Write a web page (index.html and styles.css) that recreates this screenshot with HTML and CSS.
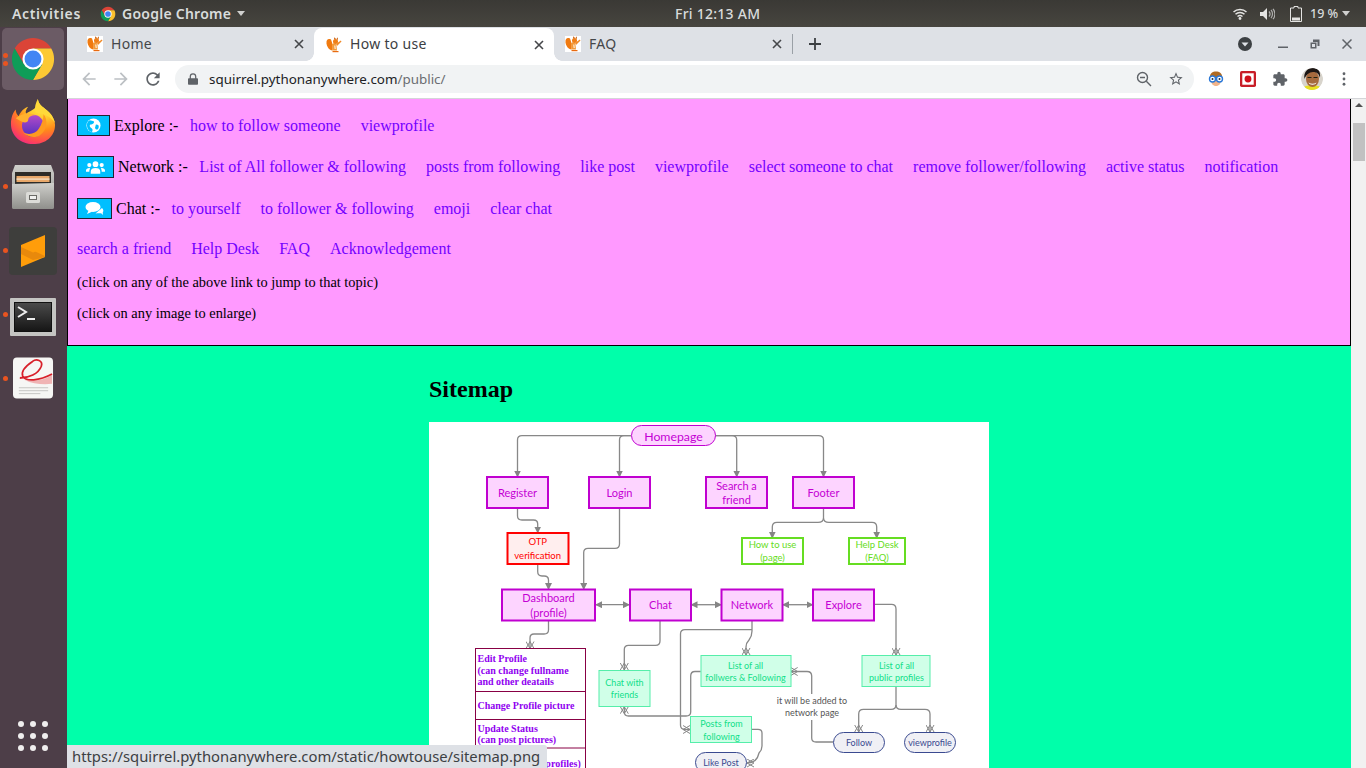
FILE: index.html
```html
<!DOCTYPE html>
<html lang="en">
<head>
<meta charset="utf-8">
<title>How to use</title>
<link rel="stylesheet" href="styles.css">
</head>
<body>
<svg class="defs" width="0" height="0" aria-hidden="true">
  <defs>
    <symbol id="squirrel" viewBox="0 0 16 16">
      <rect width="16" height="16" fill="#fff"/>
      <path d="M5 2.500C2 1 0 3 0.500 6.500S3 13 6.500 13.500C7 10 6.500 6 5 2.500z" fill="#f07a10"/>
      <path d="M6 7c2-1.500 4-1 4.500 2l.5 4.500H6.500z" fill="#f29a3a"/>
      <circle cx="9.500" cy="4.500" r="2.500" fill="#ef7f18"/>
      <path d="M8 2.500l.3-2.200L10 2zM10.500 2l1.200-1.700.3 2.700z" fill="#c85a08"/>
      <path d="M10 7l4.800-3.500.7 1-4.500 4.500z" fill="#f08a28"/>
      <path d="M6.500 14h6v1.200h-6z" fill="#e86a10"/>
      <path d="M8 8.500h1.500l.5 3.500H8.500z" fill="#fcdcb8"/>
    </symbol>
    <symbol id="close-x" viewBox="0 0 10 10">
      <path d="M1 1l8 8M9 1l-8 8" fill="none" stroke="currentColor" stroke-width="1.600"/>
    </symbol>
    <symbol id="arrow-back" viewBox="0 0 24 24">
      <path d="M20 11H7.830l5.590-5.590L12 4l-8 8 8 8 1.410-1.410L7.830 13H20v-2z" fill="currentColor"/>
    </symbol>
    <marker id="tri" viewBox="0 0 7 7" refX="6" refY="3.500" markerWidth="7" markerHeight="7" markerUnits="userSpaceOnUse" orient="auto-start-reverse">
      <path d="M0 0L7 3.500L0 7z" fill="#858585"/>
    </marker>
    <marker id="open" viewBox="0 0 8 9" refX="7.500" refY="4.500" markerWidth="8" markerHeight="9" markerUnits="userSpaceOnUse" orient="auto">
      <path d="M0.500 0.500L7.500 4.500L0.500 8.500M7.500 0.500L0.500 4.500L7.500 8.500" fill="none" stroke="#888" stroke-width="1"/>
    </marker>
    <radialGradient id="ffGrad" cx="0.72" cy="0.08" r="1.050">
      <stop offset="0" stop-color="#fff44f"/>
      <stop offset="0.32" stop-color="#ffcb2e"/>
      <stop offset="0.58" stop-color="#ff8a1a"/>
      <stop offset="0.82" stop-color="#ff4a50"/>
      <stop offset="1" stop-color="#ee1f90"/>
    </radialGradient>
    <linearGradient id="ffPurple" x1="0" y1="0" x2="0" y2="1">
      <stop offset="0" stop-color="#b54bc8"/>
      <stop offset="1" stop-color="#4e30c0"/>
    </linearGradient>
    <linearGradient id="cabinet" x1="0" y1="0" x2="0" y2="1">
      <stop offset="0" stop-color="#cfcfcb"/>
      <stop offset="1" stop-color="#8f8f8b"/>
    </linearGradient>
    <linearGradient id="termGrad" x1="0" y1="0" x2="0" y2="1">
      <stop offset="0" stop-color="#4a4a4a"/>
      <stop offset="1" stop-color="#161616"/>
    </linearGradient>
  </defs>
</svg>

<div class="desktop">
  <header class="topbar">
    <div class="top-left">
      <span class="top-item activities">Activities</span>
      <span class="top-item app-name">
        <svg class="app-logo" viewBox="0 0 48 48">
          <path d="M4.950 13A22 22 0 0 1 43.050 13H24L14.500 29.500z" fill="#db4437"/>
          <path d="M43.050 13A22 22 0 0 1 24 46L33.500 29.500L24 13z" fill="#fbc02d"/>
          <path d="M24 46A22 22 0 0 1 4.950 13L14.500 29.500H33.500z" fill="#0f9d58"/>
          <circle cx="24" cy="24" r="11" fill="#fff"/><circle cx="24" cy="24" r="8.500" fill="#4285f4"/>
        </svg>
        Google Chrome
        <i class="caret"></i>
      </span>
    </div>
    <span class="top-item clock">Fri 12:13 AM</span>
    <div class="top-right">
      <svg class="tray wifi" viewBox="0 0 14 12"><path d="M0.500 4C4 0.500 10 0.500 13.500 4M2.500 6.300C5 4 9 4 11.500 6.300M4.500 8.500C6 7.300 8 7.300 9.500 8.500" fill="none" stroke="#e4e4e2" stroke-width="1.500"/><circle cx="7" cy="10.500" r="1.400" fill="#e4e4e2"/></svg>
      <svg class="tray volume" viewBox="0 0 15 12"><path d="M0 4h3l4-4v12L3 8H0z" fill="#e4e4e2"/><path d="M9 3.500c1.300 1.500 1.300 3.500 0 5M11 2c2 2 2 6 0 8M13 0.800c2.600 3 2.600 7.400 0 10.400" fill="none" stroke="#b0b0ae" stroke-width="1.200"/></svg>
      <svg class="tray battery" viewBox="0 0 12 16"><path d="M4 0.500h4v1.500h3.500v13.500h-11V2H4z" fill="none" stroke="#e4e4e2" stroke-width="1"/><rect x="2" y="11.500" width="8" height="3" fill="#e4e4e2"/></svg>
      <span class="top-item percent">19 %</span>
      <i class="caret"></i>
    </div>
  </header>

  <div class="workspace">
    <nav class="dock">
      <div class="dock-item active">
        <i class="run-dot upper"></i><i class="run-dot lower"></i>
        <svg class="dock-icon" viewBox="0 0 48 48">
          <path d="M4.950 13A22 22 0 0 1 43.050 13H24L14.500 29.500z" fill="#db4437"/>
          <path d="M43.050 13A22 22 0 0 1 24 46L33.500 29.500L24 13z" fill="#fcc934"/>
          <path d="M24 46A22 22 0 0 1 4.950 13L14.500 29.500H33.500z" fill="#0f9d58"/>
          <circle cx="24" cy="24" r="11" fill="#fff"/><circle cx="24" cy="24" r="8.800" fill="#4285f4"/>
        </svg>
      </div>
      <div class="dock-item">
        <svg class="dock-icon firefox" viewBox="0 0 48 48">
          <path d="M29 0C30 7 36 9 41 14C45 18 47 23 47 27C47 39 37 47 24 47C11 47 1 38 1 26C1 20 3 14 6 11C6 14 7 16 9 18C11 13 15 9 19 8C16 12 16 14 17 15C22 12 30 10 29 0Z" fill="url(#ffGrad)"/>
          <path d="M29 0C30 7 36 9 41 14C44 17 46 21 47 25C42 17 33 15 27 14C25 9 27 4 29 0Z" fill="#ffd93a"/>
          <circle cx="24" cy="28" r="11.500" fill="url(#ffPurple)"/>
          <path d="M6 20C12 15 20 14 27 17C22 17 19 19 19 22C19 25 14 25 11 23Z" fill="#ffb22e"/>
          <path d="M35 16C40 22 39 33 31 38C26 41 18 40 14 35C20 38 27 36 30 31C33 27 35 21 35 16Z" fill="#ff9a20"/>
        </svg>
      </div>
      <div class="dock-item">
        <i class="run-dot"></i>
        <svg class="dock-icon files" viewBox="0 0 42 44">
          <path d="M3 0h36l3 8v34a2 2 0 0 1-2 2H2a2 2 0 0 1-2-2V8z" fill="url(#cabinet)"/>
          <rect x="3" y="7" width="36" height="14" fill="#2e2c28"/>
          <rect x="4.500" y="11" width="33" height="6" fill="#e8a86a"/>
          <rect x="4.500" y="13.500" width="33" height="1.200" fill="#f5e5d0"/>
          <path d="M0 19l39-1 3 0v24a2 2 0 0 1-2 2H2a2 2 0 0 1-2-2z" fill="url(#cabinet)"/>
          <rect x="14" y="27" width="14" height="11" rx="1.500" fill="#dcdcd8"/>
          <rect x="17" y="30" width="8" height="5" fill="#6a6a66"/><rect x="18" y="31" width="6" height="3" fill="#f0f0ee"/>
        </svg>
      </div>
      <div class="dock-item">
        <i class="run-dot"></i>
        <svg class="dock-icon sublime" viewBox="0 0 48 48">
          <rect width="48" height="48" rx="4" fill="#3e3e3c"/>
          <path d="M12 27L36 18V30L12 40z" fill="#ff9d0a"/>
          <path d="M12 18L36 29V30L24 33L12 27z" fill="#e8890c"/>
          <path d="M12 18L36 8V21L24 25.500L12 20z" fill="#ff9d0a"/>
        </svg>
      </div>
      <div class="dock-item">
        <i class="run-dot"></i>
        <svg class="dock-icon terminal" viewBox="0 0 46 38">
          <rect width="46" height="38" rx="1" fill="#c4c4c2"/>
          <rect x="4" y="4" width="38" height="30" fill="#111"/>
          <rect x="5" y="5" width="36" height="28" fill="url(#termGrad)"/>
          <path d="M8 9l8 5-8 5" fill="none" stroke="#eee" stroke-width="2"/>
          <rect x="17" y="20" width="8" height="2" fill="#eee"/>
        </svg>
      </div>
      <div class="dock-item">
        <i class="run-dot"></i>
        <svg class="dock-icon evince" viewBox="0 0 42 42">
          <rect width="41" height="42" rx="4" fill="#f6f6f4"/>
          <path d="M12 23C22 25 32 23 40 18V27C30 28 20 27 12 23Z" fill="#f0b4b4"/>
          <path d="M7 21C16 21 26 17 29 9C31 3 24 1 20 4C14 8 8 14 10 19C13 25 27 24 40 17" fill="none" stroke="#d8202a" stroke-width="1.800"/>
          <path d="M6 31h30M6 34h30M6 37h22" stroke="#c4c4c2" stroke-width="1"/>
        </svg>
      </div>
      <div class="app-grid">
        <i></i><i></i><i></i><i></i><i></i><i></i><i></i><i></i><i></i>
      </div>
    </nav>

    <main class="browser">
      <div class="tabstrip">
        <div class="tab">
          <svg class="favicon"><use href="#squirrel"/></svg>
          <span class="tab-title">Home</span>
          <svg class="tab-close"><use href="#close-x"/></svg>
        </div>
        <div class="tab current">
          <svg class="favicon"><use href="#squirrel"/></svg>
          <span class="tab-title">How to use</span>
          <svg class="tab-close"><use href="#close-x"/></svg>
        </div>
        <div class="tab">
          <svg class="favicon"><use href="#squirrel"/></svg>
          <span class="tab-title">FAQ</span>
          <svg class="tab-close"><use href="#close-x"/></svg>
        </div>
        <i class="tab-divider"></i>
        <svg class="new-tab" viewBox="0 0 12 12"><path d="M6 0v12M0 6h12" stroke="#3c4043" stroke-width="1.800"/></svg>
        <div class="window-controls">
          <svg class="win-search" viewBox="0 0 14 14"><circle cx="7" cy="7" r="7" fill="#3c4043"/><path d="M3.500 5.500h7L7 9.500z" fill="#dee1e6"/></svg>
          <svg class="win-btn" viewBox="0 0 10 10"><rect x="0" y="7.500" width="10" height="1.500" fill="#5f6368"/></svg>
          <svg class="win-btn" viewBox="0 0 10 10"><path d="M3 0.500h6.500v6.500H7.500V3H3zM0.500 3.500h6v6h-6z" fill="#5f6368"/><rect x="2" y="5" width="3" height="3" fill="#dee1e6"/></svg>
          <svg class="win-btn" viewBox="0 0 10 10"><path d="M0.500 0.500l9 9M9.500 0.500l-9 9" stroke="#5f6368" stroke-width="1.500"/></svg>
        </div>
      </div>

      <div class="toolbar">
        <button class="tool-btn faded"><svg class="tool-icon"><use href="#arrow-back"/></svg></button>
        <button class="tool-btn faded"><svg class="tool-icon flip"><use href="#arrow-back"/></svg></button>
        <button class="tool-btn"><svg class="tool-icon" viewBox="0 0 24 24"><path d="M17.650 6.350C16.200 4.900 14.210 4 12 4c-4.420 0-7.990 3.580-7.990 8s3.570 8 7.990 8c3.730 0 6.840-2.550 7.730-6h-2.080c-.82 2.330-3.040 4-5.650 4-3.310 0-6-2.690-6-6s2.690-6 6-6c1.660 0 3.140.69 4.220 1.780L13 11h7V4l-2.350 2.350z" fill="currentColor"/></svg></button>
        <div class="omnibox">
          <svg class="lock" viewBox="0 0 12 14"><path d="M2 6V4a4 4 0 0 1 8 0v2h1a1 1 0 0 1 1 1v6a1 1 0 0 1-1 1H1a1 1 0 0 1-1-1V7a1 1 0 0 1 1-1zm1.500 0h5V4a2.500 2.500 0 0 0-5 0z" fill="#5f6368"/></svg>
          <span class="url"><span class="host">squirrel.pythonanywhere.com</span>/public/</span>
          <svg class="omni-icon" viewBox="0 0 16 16"><circle cx="6.500" cy="6.500" r="5" fill="none" stroke="#5f6368" stroke-width="1.400"/><path d="M4 6.500h5M10.300 10.300l4.700 4.700" stroke="#5f6368" stroke-width="1.400"/></svg>
          <svg class="omni-icon" viewBox="0 0 24 24"><path d="M22 9.240l-7.190-.62L12 2 9.190 8.630 2 9.240l5.460 4.730L5.820 21 12 17.270 18.180 21l-1.630-7.030L22 9.240zM12 15.400l-3.760 2.270 1-4.280-3.320-2.880 4.380-.38L12 6.100l1.710 4.040 4.380.38-3.320 2.880 1 4.280L12 15.400z" fill="#5f6368"/></svg>
        </div>
        <button class="tool-btn ext">
          <svg class="ext-icon" viewBox="0 0 16 16"><path d="M2 8C1 2 5 0.500 8 0.500S15 2 14 8z" fill="#b06a20"/><path d="M3 8c0 5 2 7 5 7s5-2 5-7z" fill="#f2b48a"/><circle cx="4.500" cy="8" r="3" fill="#fff" stroke="#2a78d8" stroke-width="1.400"/><circle cx="11.500" cy="8" r="3" fill="#fff" stroke="#2a78d8" stroke-width="1.400"/><circle cx="4.500" cy="8" r="1" fill="#234"/><circle cx="11.500" cy="8" r="1" fill="#234"/></svg>
        </button>
        <button class="tool-btn ext">
          <svg class="ext-icon" viewBox="0 0 14 14"><rect width="14" height="14" rx="1.500" fill="#c81e28"/><rect x="2" y="2" width="10" height="10" fill="#fff"/><circle cx="7" cy="7" r="3" fill="#d0101c"/></svg>
        </button>
        <button class="tool-btn ext">
          <svg class="ext-icon" viewBox="0 0 24 24"><path d="M20.500 11H19V7c0-1.100-.9-2-2-2h-4V3.500C13 2.120 11.880 1 10.500 1S8 2.120 8 3.500V5H4c-1.100 0-1.990.9-1.990 2v3.800H3.500c1.490 0 2.700 1.210 2.700 2.700s-1.210 2.700-2.700 2.700H2V20c0 1.100.9 2 2 2h3.800v-1.500c0-1.490 1.210-2.700 2.700-2.700 1.490 0 2.700 1.210 2.700 2.700V22H17c1.100 0 2-.9 2-2v-4h1.500c1.380 0 2.500-1.120 2.500-2.500S21.880 11 20.500 11z" fill="#5f6368"/></svg>
        </button>
        <button class="tool-btn ext">
          <svg class="avatar" viewBox="0 0 22 22"><circle cx="11" cy="11" r="11" fill="#d8d4cc"/><path d="M3 19c2-2.500 14-2.500 16 0a11 11 0 0 1-16 0z" fill="#e8e020"/><ellipse cx="11.500" cy="11" rx="6.500" ry="8" fill="#a56a3e"/><path d="M3.500 11C2 3 8 0 12 0s8 2 7 10c-1-4-3-6-7-6S5 7 3.500 11z" fill="#1c1614"/><path d="M7.500 14.500c2.500 1.800 5.500 1.800 8 0-1 3-7 3-8 0z" fill="#fff"/><path d="M6.500 9.500h4M12.500 9.500h4" stroke="#221" stroke-width="1"/></svg>
        </button>
        <button class="tool-btn ext">
          <svg class="menu-dots" viewBox="0 0 4 16"><circle cx="2" cy="2" r="1.600" fill="#5f6368"/><circle cx="2" cy="8" r="1.600" fill="#5f6368"/><circle cx="2" cy="14" r="1.600" fill="#5f6368"/></svg>
        </button>
      </div>

      <div class="viewport">
        <div class="page">
          <section class="topics">
            <p class="row">
              <span class="topic-btn explore">
                <svg class="btn-icon" viewBox="0 0 16 16"><circle cx="8" cy="8" r="7.500" fill="#fff"/><path d="M4 2.500c2 0 3 1 4 1s1 2-1 3-3 0-3 2 3 2 3 4-1 2.500-1.500 2.500C3 14 1 11 1 8s1-4.500 3-5.500zM11 7c2 0 3 1 2.500 3S11.500 13 10.500 12s-1-2-.5-3 0-2 1-2z" fill="#00bfff"/></svg>
              </span>
              <span class="label">Explore :-</span>
              <a href="#follow">how to follow someone</a>
              <a href="#viewprofile">viewprofile</a>
            </p>
            <p class="row">
              <span class="topic-btn network">
                <svg class="btn-icon wide" viewBox="0 0 20 14"><circle cx="10" cy="4" r="3" fill="#fff"/><path d="M5 14v-2c0-3 2-4 5-4s5 1 5 4v2z" fill="#fff"/><circle cx="3.500" cy="5" r="2.200" fill="#fff"/><circle cx="16.500" cy="5" r="2.200" fill="#fff"/><path d="M0 12v-1.500C0 9 1.500 8 3.500 8c.8 0 .8.500.5 1-.5 1-.5 2-.5 3zM20 12v-1.500C20 9 18.500 8 16.500 8c-.8 0-.8.500-.5 1 .5 1 .5 2 .5 3z" fill="#fff"/></svg>
              </span>
              <span class="label">Network :-</span>
              <a href="#list">List of All follower &amp; following</a>
              <a href="#posts">posts from following</a>
              <a href="#like">like post</a>
              <a href="#viewprofile2">viewprofile</a>
              <a href="#select">select someone to chat</a>
              <a href="#remove">remove follower/following</a>
              <a href="#active">active status</a>
              <a href="#notification">notification</a>
            </p>
            <p class="row chat-row">
              <span class="topic-btn chat">
                <svg class="btn-icon wide" viewBox="0 0 18 14"><path d="M10 11.500c2-.3 4.500-.5 6 0l1.500 1.500-.3-2.500c1-1 1-3-.7-4.500z" fill="#fff"/><ellipse cx="7.500" cy="5" rx="7.500" ry="5" fill="#fff"/><path d="M3 8.500L1.500 12 7 9.500z" fill="#fff"/></svg>
              </span>
              <span class="label">Chat :-</span>
              <a href="#yourself">to yourself</a>
              <a href="#tofollower">to follower &amp; following</a>
              <a href="#emoji">emoji</a>
              <a href="#clear">clear chat</a>
            </p>
            <p class="row">
              <a href="#search">search a friend</a>
              <a href="#help">Help Desk</a>
              <a href="#faq">FAQ</a>
              <a href="#ack">Acknowledgement</a>
            </p>
            <div class="notes">
              <p>(click on any of the above link to jump to that topic)</p>
              <p>(click on any image to enlarge)</p>
            </div>
          </section>

          <section class="sitemap">
            <h2>Sitemap</h2>
            <svg class="chart" viewBox="429 422 560 346" role="img" aria-label="Sitemap diagram">
              <rect x="429" y="422" width="560" height="346" fill="#fff"/>
              <g class="edges">
                <path marker-end="url(#tri)" d="M631 435.700H522Q517.500 435.700 517.500 440V476.500"/>
                <path marker-end="url(#tri)" d="M631 435.700H624Q619.500 435.700 619.500 440V476.500"/>
                <path marker-end="url(#tri)" d="M715 435.700H732Q736.700 435.700 736.700 440V476.500"/>
                <path marker-end="url(#tri)" d="M715 435.700H818.500Q823.500 435.700 823.500 440V476.500"/>
                <path marker-end="url(#tri)" d="M517.500 508V516Q517.500 520 522 520H533.500Q537.700 520 537.700 524V532.500"/>
                <path marker-end="url(#tri)" d="M537.700 564V571.500Q537.700 576 542 576H544Q548.500 576 548.500 580V589"/>
                <path marker-end="url(#tri)" d="M619.500 508V544Q619.500 548.300 615 548.300H588Q583.700 548.300 583.700 552.500V589"/>
                <path marker-start="url(#tri)" marker-end="url(#tri)" d="M596 604.700H629"/>
                <path marker-start="url(#tri)" marker-end="url(#tri)" d="M691.500 604.700H721"/>
                <path marker-start="url(#tri)" marker-end="url(#tri)" d="M783 604.700H812.500"/>
                <path marker-end="url(#open)" d="M548.500 620.700V630Q548.500 634 544 634H534Q530 634 530 638V648.500"/>
                <path marker-end="url(#open)" d="M660 620.700V641Q660 645.300 655.500 645.300H628.500Q624.300 645.300 624.300 649.500V670"/>
                <path marker-end="url(#open)" d="M874.700 604.300H891.500Q896 604.300 896 609V655"/>
                <path marker-end="url(#open)" d="M752 620.700V631Q752 636 749 640Q746 643 746 647V655"/>
                <path marker-end="url(#open)" d="M752 629.700H685Q680.500 629.700 680.500 634V725Q680.500 729.500 685 729.500H690"/>
                <path marker-end="url(#open)" d="M700.700 671.500H695Q690.700 671.500 690.700 676V712Q690.700 716 686 716H628.500Q624.300 716 624.300 712V706.700"/>
                <path marker-end="url(#open)" d="M833.300 742H816Q811.700 742 811.700 738V676Q811.700 671.500 807 671.500H790.700"/>
                <path marker-end="url(#open)" d="M896 687V705Q896 709.300 891 709.300H863.500Q858.700 709.300 858.700 714V732"/>
                <path marker-end="url(#open)" d="M896 705Q896 709.300 901 709.300H925Q930 709.300 930 714V732"/>
                <path marker-end="url(#open)" d="M752 729.300H758Q762 729.300 762 733V746Q762 750 759 753Q757 763 747 763"/>
                <path marker-end="url(#tri)" d="M823.500 508V518Q823.500 522.300 818 522.300H777Q772.300 522.300 772.300 527V537.700"/>
                <path marker-end="url(#tri)" d="M823.500 518Q823.500 522.300 829 522.300H872Q876.700 522.300 876.700 527V537.700"/>
              </g>
              <rect class="pink-pill" x="631.500" y="425.500" width="84" height="20" rx="10"/>
              <text class="pink-t home-t" x="673.500" y="441">Homepage</text>
              <rect class="pink" x="487" y="477" width="61" height="31"/>
              <text class="pink-t" x="517.500" y="497">Register</text>
              <rect class="pink" x="589" y="477" width="61" height="31"/>
              <text class="pink-t" x="619.500" y="497">Login</text>
              <rect class="pink" x="706" y="477" width="61" height="31"/>
              <text class="pink-t" x="736.500" y="489.500">Search a</text>
              <text class="pink-t" x="736.500" y="504">friend</text>
              <rect class="pink" x="793" y="477" width="61" height="31"/>
              <text class="pink-t" x="823.500" y="497">Footer</text>
              <rect class="red" x="507.500" y="533" width="61" height="31"/>
              <text class="red-t" x="537.700" y="545">OTP</text>
              <text class="red-t" x="537.700" y="559">verification</text>
              <rect class="pink" x="502" y="589.500" width="93" height="31"/>
              <text class="pink-t" x="548.500" y="602">Dashboard</text>
              <text class="pink-t" x="548.500" y="617">(profile)</text>
              <rect class="pink" x="630" y="589.500" width="61" height="31"/>
              <text class="pink-t" x="660.500" y="609">Chat</text>
              <rect class="pink" x="721.500" y="589.500" width="61" height="31"/>
              <text class="pink-t" x="752" y="609">Network</text>
              <rect class="pink" x="813" y="589.500" width="61" height="31"/>
              <text class="pink-t" x="843.500" y="609">Explore</text>
              <rect class="lime" x="742" y="538" width="61" height="26"/>
              <text class="lime-t" x="772.500" y="548">How to use</text>
              <text class="lime-t" x="772.500" y="561">(page)</text>
              <rect class="lime" x="849" y="538" width="56" height="26"/>
              <text class="lime-t" x="877" y="548">Help Desk</text>
              <text class="lime-t" x="877" y="561">(FAQ)</text>
              <rect class="tbl" x="475.500" y="648.500" width="110" height="130"/>
              <path class="tbl-line" d="M475.500 691.500H585.500M475.500 719.500H585.500M475.500 748H585.500"/>
              <text class="tbl-t" x="477.500" y="662">Edit Profile</text>
              <text class="tbl-t" x="477.500" y="674">(can change fullname</text>
              <text class="tbl-t" x="477.500" y="685">and other deatails</text>
              <text class="tbl-t" x="477.500" y="709">Change Profile picture</text>
              <text class="tbl-t" x="477.500" y="732">Update Status</text>
              <text class="tbl-t" x="477.500" y="743">(can post pictures)</text>
              <text class="tbl-t" x="477.500" y="767">(can view other profiles)</text>
              <rect class="mint" x="599" y="670.500" width="51" height="36"/>
              <text class="mint-t" x="624.500" y="686">Chat with</text>
              <text class="mint-t" x="624.500" y="698">friends</text>
              <rect class="mint" x="701" y="655.500" width="90" height="31"/>
              <text class="mint-t" x="745.500" y="669">List of all</text>
              <text class="mint-t" x="745.500" y="681">follwers &amp; Following</text>
              <rect class="mint" x="862" y="655.500" width="68" height="31"/>
              <text class="mint-t" x="896.500" y="669">List of all</text>
              <text class="mint-t" x="896.500" y="681">public profiles</text>
              <rect class="mint" x="690.500" y="716.500" width="61" height="26"/>
              <text class="mint-t" x="721.500" y="727">Posts from</text>
              <text class="mint-t" x="721.500" y="740">following</text>
              <rect class="label-bg" x="776" y="694" width="72" height="26"/>
              <text class="note-t" x="812" y="704">it will be added to</text>
              <text class="note-t" x="812" y="716">network page</text>
              <rect class="blue-pill" x="833.500" y="732.500" width="51" height="20" rx="10"/>
              <text class="blue-t" x="859" y="746">Follow</text>
              <rect class="blue-pill" x="904.500" y="732.500" width="51" height="20" rx="10"/>
              <text class="blue-t" x="930" y="746">viewprofile</text>
              <rect class="blue-pill" x="695.500" y="752.500" width="51" height="20" rx="10"/>
              <text class="blue-t" x="721" y="766">Like Post</text>
            </svg>
          </section>
        </div>
        <div class="scrollbar">
          <i class="scroll-up"></i>
          <i class="scroll-thumb"></i>
        </div>
        <div class="status-bubble">https://squirrel.pythonanywhere.com/static/howtouse/sitemap.png</div>
      </div>
    </main>
  </div>
</div>
</body>
</html>
```
FILE: styles.css
```css
* { box-sizing: border-box; }
html, body { margin: 0; height: 100%; overflow: hidden; }
body { font-family: "Liberation Serif", serif; }
.defs { position: absolute; }
i { display: block; font-style: normal; }

.desktop { width: 1366px; height: 768px; display: flex; flex-direction: column; overflow: hidden; }

/* top bar */
.topbar {
  height: 27px; flex: none; display: flex; align-items: center;
  background: linear-gradient(#3a3935, #47453f);
  color: #d9dcdc; font-family: "Noto Sans", sans-serif; font-size: 14px; font-weight: 600;
}
.top-item { white-space: nowrap; }
.top-left { flex: 0 0 675px; display: flex; align-items: center; padding-left: 12px; }
.activities { width: 88px; letter-spacing: .65px; }
.app-name { display: flex; align-items: center; gap: 6px; letter-spacing: .25px; }
.app-logo { width: 16px; height: 16px; }
.caret { width: 0; height: 0; border-left: 4.500px solid transparent; border-right: 4.500px solid transparent; border-top: 5px solid #d0d0ce; }
.clock { flex: 0 0 auto; font-weight: 500; letter-spacing: .25px; }
.top-right { margin-left: auto; display: flex; align-items: center; padding-right: 16px; }
.tray { display: block; }
.wifi { width: 14px; height: 12px; margin-right: 13px; }
.volume { width: 15px; height: 12px; margin-right: 15px; }
.battery { width: 12px; height: 16px; margin-right: 8px; }
.percent { width: 32px; font-size: 12.500px; font-weight: 500; }

.workspace { flex: 1; display: flex; min-height: 0; }

/* dock */
.dock { width: 67px; flex: none; background: #4d3e48; display: flex; flex-direction: column; }
.dock-item { position: relative; height: 64px; display: flex; align-items: center; justify-content: center; margin: 0 3px 0 2px; flex: none; }
.dock-item.active { height: 62px; margin-top: 1px; margin-bottom: 1px; background: #6b5b65; border-radius: 5px; }
.dock-icon { width: 46px; height: 46px; display: block; }
.dock-item .firefox { margin-bottom: 2px; }
.dock-item .files { width: 42px; height: 44px; }
.dock-item .sublime { width: 48px; height: 48px; }
.dock-item .terminal { width: 46px; height: 38px; margin-top: 4px; }
.dock-item .evince { width: 41px; height: 42px; margin-bottom: 2px; }
.run-dot { position: absolute; left: 0.500px; top: 28.500px; width: 5px; height: 5px; border-radius: 50%; background: #e95420; }
.run-dot.upper { top: 24.500px; }
.run-dot.lower { top: 32.500px; }
.app-grid { margin-top: auto; margin-bottom: 17px; margin-left: 18px; display: grid; grid-template-columns: repeat(3, 6px); gap: 6px; }
.app-grid i { width: 6px; height: 6px; border-radius: 50%; background: #f0eeee; }

/* browser */
.browser { flex: 1; min-width: 0; display: flex; flex-direction: column; }
.tabstrip { height: 34px; flex: none; background: #dee1e6; display: flex; align-items: stretch; padding-left: 8px; font-family: "Noto Sans", sans-serif; font-size: 14px; letter-spacing: .3px; color: #45474a; }
.tab { width: 239px; flex: none; display: flex; align-items: center; padding: 0 10px 0 12px; position: relative; }
.tab.current { background: #fff; color: #3c4043; border-radius: 8px 8px 0 0; width: 240px; margin-right: -1px; margin-top: 1px; }
.tab.current::before, .tab.current::after { content: ""; position: absolute; bottom: 0; width: 8px; height: 8px; }
.tab.current::before { left: -8px; background: radial-gradient(circle at 0 0, transparent 7.500px, #fff 8px); }
.tab.current::after { right: -8px; background: radial-gradient(circle at 100% 0, transparent 7.500px, #fff 8px); }
.favicon { width: 16px; height: 16px; flex: none; }
.tab-title { margin-left: 8px; flex: 1; white-space: nowrap; padding-bottom: 2px; }
.tab-close { width: 10px; height: 10px; flex: none; color: #45474a; }
.tab-divider { width: 1px; height: 20px; background: #9aa0a6; align-self: center; flex: none; }
.new-tab { width: 12px; height: 12px; align-self: center; margin-left: 16px; flex: none; }
.window-controls { margin-left: auto; display: flex; align-items: center; padding-right: 14px; }
.win-search { width: 14px; height: 14px; margin-right: 26px; }
.win-btn { width: 10px; height: 10px; margin-left: 22px; }
.win-search + .win-btn { margin-left: 0; }

.toolbar { height: 38px; flex: none; background: #fff; border-bottom: 1px solid #d4d5d8; display: flex; align-items: center; padding: 0 6px 1px 6px; }
.tool-btn { width: 32px; height: 32px; flex: none; border: 0; padding: 0; background: none; display: flex; align-items: center; justify-content: center; color: #5f6368; }
.tool-btn.faded { color: #bcc0c4; }
.tool-icon { width: 20px; height: 20px; }
.flip { transform: scaleX(-1); }
.omnibox { flex: 1; height: 28px; margin: 0 6px; background: #f1f3f4; border-radius: 14px; display: flex; align-items: center; padding: 0 10px 0 13px; font-family: "Noto Sans", sans-serif; font-size: 13.400px; color: #6a6d71; }
.lock { width: 10px; height: 12px; flex: none; }
.url { margin-left: 11px; flex: 1; white-space: nowrap; padding-bottom: 1px; }
.host { color: #202124; }
.omni-icon { width: 16px; height: 16px; margin-left: 16px; flex: none; }
.ext-icon { width: 16px; height: 16px; }
.avatar { width: 22px; height: 22px; border-radius: 50%; }
.menu-dots { width: 4px; height: 14px; }

/* viewport */
.viewport { flex: 1; min-height: 0; display: flex; position: relative; overflow: hidden; background: #00ffaa; }
.page { flex: 1; min-width: 0; overflow: hidden; }
.topics { height: 247px; background: #ff99ff; border: 1px solid #000; border-top: 0; padding: 6px 0 0 9px; font-size: 16px; color: #000; }
.row { margin: 0; height: 41px; display: flex; align-items: center; white-space: nowrap; }
.chat-row { padding-top: 2px; }
.row a { color: #7400ff; text-decoration: none; margin-right: 20px; }
.label { margin-left: 4px; margin-right: 11.600px; }
.topic-btn { flex: none; background: #00bfff; border: 1px solid #223; display: flex; align-items: center; justify-content: center; }
.topic-btn.explore { width: 33px; height: 21px; }
.topic-btn.network { width: 37px; height: 22px; }
.topic-btn.chat { width: 35px; height: 21px; }
.btn-icon { width: 15px; height: 15px; }
.btn-icon.wide { width: 19px; height: 14px; }
.notes { display: flex; flex-direction: column; gap: 5px; font-size: 14.400px; }
.notes p { margin: 0; height: 26px; line-height: 26px; }

.sitemap { width: 560px; margin: 0 auto; }
.sitemap h2 { margin: 29px 0 19px; font-size: 24px; line-height: 28px; font-weight: bold; color: #000; }
.chart { display: block; width: 560px; height: 346px; overflow: hidden; }

.edges path { fill: none; stroke: #888; stroke-width: 1.300; }
.chart text { font-family: Lato, sans-serif; font-size: 10px; text-anchor: middle; }
.pink { fill: #fdd4ff; stroke: #c000d0; stroke-width: 2; }
.pink-pill { fill: #fdd4ff; stroke: #c000d0; stroke-width: 1; }
.chart .pink-t { fill: #c400d4; font-size: 11px; }
.chart .home-t { font-size: 12.300px; }
.red { fill: #ffeeee; stroke: #ff0000; stroke-width: 2; }
.chart .red-t { fill: #ff0000; font-size: 9.500px; }
.lime { fill: #fff; stroke: #66dd22; stroke-width: 2; }
.chart .lime-t { fill: #66dd22; font-size: 9.500px; }
.mint { fill: #d0ffe8; stroke: #55eeaa; stroke-width: 1; }
.chart .mint-t { fill: #10e088; font-size: 9px; }
.label-bg { fill: #fff; }
.chart .note-t { fill: #555; font-size: 9px; }
.blue-pill { fill: #f0f0f5; stroke: #3a4a90; stroke-width: 1; }
.chart .blue-t { fill: #3a4a90; font-size: 9px; }
.tbl { fill: #fff; stroke: #880044; stroke-width: 1; }
.tbl-line { stroke: #880044; stroke-width: 1; fill: none; }
.chart .tbl-t { font-family: "Liberation Serif", serif; font-size: 10px; fill: #9000f0; text-anchor: start; font-weight: bold; }

.scrollbar { width: 15px; flex: none; background: #f1f1f1; position: relative; }
.scroll-up { width: 0; height: 0; margin: 4px auto 0; border-left: 4px solid transparent; border-right: 4px solid transparent; border-bottom: 4px solid #505050; }
.scroll-thumb { width: 12px; height: 38px; margin: 16px auto 0; background: #c1c1c1; }

.status-bubble { position: absolute; left: 0; bottom: 0; width: 480px; height: 23px; background: #dee1e6; border-top-right-radius: 3px; padding-left: 5px; font-family: "Noto Sans", sans-serif; font-size: 14.800px; line-height: 23px; color: #3c4043; white-space: nowrap; }
```
